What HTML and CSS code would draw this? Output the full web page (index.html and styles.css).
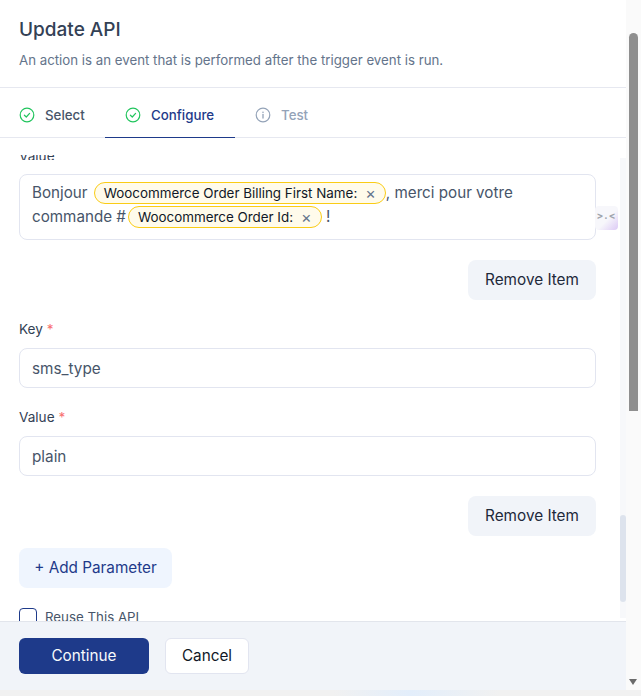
FILE: index.html
```html
<!DOCTYPE html>
<html lang="en">
<head>
<meta charset="utf-8">
<title>Update API</title>
<link rel="stylesheet" href="styles.css">
</head>
<body>
<div class="page">
  <main class="modal">
    <header class="head">
      <h1 class="title">Update API</h1>
      <p class="desc">An action is an event that is performed after the trigger event is run.</p>
    </header>
    <nav class="tabs">
      <div class="tab tab-first">
        <svg class="ico" viewBox="0 0 16 16"><circle cx="8" cy="8" r="6.8" fill="none" stroke="#22c55e" stroke-width="1.2"/><path d="M5.4 8.2l1.9 1.8 3.3-3.6" fill="none" stroke="#22c55e" stroke-width="1.2" stroke-linecap="round" stroke-linejoin="round"/></svg>
        <span class="tab-label">Select</span>
      </div>
      <div class="tab tab-active">
        <svg class="ico" viewBox="0 0 16 16"><circle cx="8" cy="8" r="6.8" fill="none" stroke="#22c55e" stroke-width="1.2"/><path d="M5.4 8.2l1.9 1.8 3.3-3.6" fill="none" stroke="#22c55e" stroke-width="1.2" stroke-linecap="round" stroke-linejoin="round"/></svg>
        <span class="tab-label">Configure</span>
      </div>
      <div class="tab tab-off">
        <svg class="ico" viewBox="0 0 16 16"><circle cx="8" cy="8" r="6.8" fill="none" stroke="#94a3b8" stroke-width="1.2"/><path d="M8 7.4v3.6" fill="none" stroke="#94a3b8" stroke-width="1.3" stroke-linecap="round"/><circle cx="8" cy="5.2" r=".8" fill="#94a3b8"/></svg>
        <span class="tab-label">Test</span>
      </div>
    </nav>
    <section class="body">
      <div class="scroll">
        <div class="content">
          <div class="label-cut"><label class="label label-inner">Value</label></div>
          <div class="editor">Bonjour <span class="tag">Woocommerce Order Billing First Name:<span class="x">×</span></span>, merci pour votre commande #<span class="tag">Woocommerce Order Id:<span class="x">×</span></span> !</div>
          <div class="gram">&gt;.&lt;</div>
          <div class="row-end row-first"><button class="btn-soft">Remove Item</button></div>
          <label class="label">Key <b>*</b></label>
          <div class="input">sms_type</div>
          <label class="label label-2">Value <b>*</b></label>
          <div class="input">plain</div>
          <div class="row-end"><button class="btn-soft">Remove Item</button></div>
          <button class="btn-add">+ Add Parameter</button>
          <div class="check"><span class="box"></span><span class="check-label">Reuse This API</span></div>
        </div>
      </div>
      <div class="track"><div class="thumb"></div></div>
    </section>
    <footer class="foot">
      <button class="btn-primary">Continue</button>
      <button class="btn-cancel">Cancel</button>
    </footer>
  </main>
  <aside class="winbar">
    <div class="winthumb"></div>
    <div class="arrow"></div>
  </aside>
</div>
<div class="strip"></div>
</body>
</html>
```
FILE: styles.css
```css
* { box-sizing: border-box; }
html, body { margin: 0; height: 696px; overflow: hidden; }
body { font-family: "Inter", "Liberation Sans", sans-serif; color: #1e293b; background: #f1f1f1; }
button { padding: 0 0 2px; font-family: inherit; font-size: 15.3px; font-weight: 400; }
.page { display: flex; height: 690px; }
.modal { width: 626px; display: flex; flex-direction: column; background: #fff; }
.head { height: 88px; padding: 18px 19px 0; border-bottom: 1px solid #e6e8f0; }
.title { margin: 0; font-size: 19px; line-height: 24px; font-weight: 550; color: #334155; }
.desc { margin: 9px 0 0; font-size: 13.27px; line-height: 18px; color: #64748b; }
.tabs { height: 50px; display: flex; border-bottom: 1px solid #e6e8f0; }
.tab { display: flex; align-items: center; gap: 10px; padding: 3px 19px 0; height: 50px; font-size: 13.3px; font-weight: 550; color: #475569; }
.tab-first { width: 105px; }
.tab-active { width: 130px; padding: 4px 19px 0 20px; color: #1e3a8a; border-bottom: 1px solid #1e3a8a; }
.tab-off { padding-left: 20px; color: #94a3b8; }
.ico { width: 16px; height: 16px; flex: none; }
.body { flex: 1; min-height: 0; display: flex; }
.scroll { flex: 1; min-width: 0; overflow: hidden; }
.content { position: relative; padding: 0 24px 0 19px; margin-top: 17px; }
.label { display: block; font-size: 13.6px; line-height: 18px; font-weight: 400; color: #334155; }
.label b { color: #f87171; font-weight: 400; }
.label-cut { height: 5px; overflow: hidden; }
.label-inner { margin-top: -8px; }
.label-2 { margin-top: 20px; }
.editor { margin-top: 14px; height: 66px; padding: 6px 12px; font-size: 15.2px; line-height: 24px; color: #475569; border: 1px solid #e2e5f0; border-radius: 8px; }
.tag { display: inline-flex; align-items: center; height: 22px; margin-left: 2px; padding: 0 9px; font-size: 13.4px; font-weight: 400; color: #111827; background: #fffbeb; border: 1px solid #facc15; border-radius: 11px; }
.x { margin-left: 8px; font-size: 16px; line-height: 16px; color: #64748b; }
.gram { position: absolute; right: 2px; top: 51px; width: 23px; height: 24px; border-radius: 4px; background: linear-gradient(135deg, #f7f7fb 55%, #dcc9f5); font-size: 10px; font-weight: 700; letter-spacing: 1px; line-height: 18px; text-align: center; color: #a0a4ad; }
.row-end { display: flex; justify-content: flex-end; margin-top: 20px; margin-bottom: 12px; }
.row-first { margin-bottom: 20px; }
.btn-soft { height: 40px; width: 128px; border: 0; border-radius: 8px; background: #f1f4f9; color: #1e293b; }
.input { margin-top: 10px; height: 40px; padding: 0 12px; display: flex; align-items: center; font-size: 15.3px; color: #475569; border: 1px solid #e2e5f0; border-radius: 8px; }
.btn-add { display: block; width: 153px; height: 40px; border: 0; border-radius: 8px; background: #eff5fe; color: #1e3a8a; }
.check { display: flex; align-items: center; gap: 8px; margin-top: 20px; font-size: 13.3px; color: #475569; }
.box { width: 18px; height: 18px; border: 1px solid #1e3a8a; border-radius: 4px; }
.track { width: 6px; margin: 20px 0 3px; background: #f7f8fa; position: relative; }
.thumb { position: absolute; top: 357px; left: 0; width: 6px; height: 87px; background: #dde3ed; border-radius: 3px; }
.foot { height: 69px; display: flex; align-items: center; gap: 16px; padding: 0 19px; background: #f1f4f9; border-top: 1px solid #e2e5ec; }
.btn-primary { width: 130px; height: 36px; border: 0; border-radius: 6px; background: #1e3a8a; color: #f8fafc; }
.btn-cancel { width: 84px; height: 36px; border: 1px solid #e2e5f0; border-radius: 6px; background: #fff; color: #111827; }
.winbar { width: 15px; background: #fafafa; position: relative; }
.winthumb { position: absolute; left: 3px; top: 33px; width: 9px; height: 378px; border-radius: 5px 5px 0 0; background: #8f8f8f; }
.arrow { position: absolute; left: 3px; bottom: 5px; width: 0; height: 0; border-left: 4.5px solid transparent; border-right: 4.5px solid transparent; border-top: 6px solid #6b6b6b; }
.strip { height: 6px; background: linear-gradient(90deg, #f1f1f1 0, #f1f1f1 52%, #e3eefb 64%, #f1f1f1 78%); }
```
